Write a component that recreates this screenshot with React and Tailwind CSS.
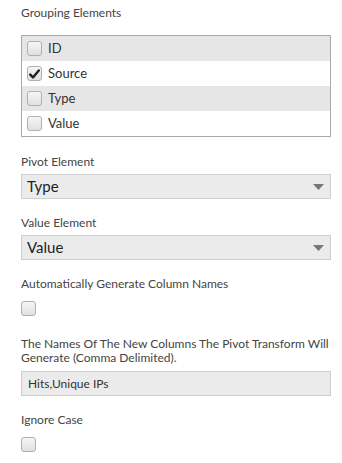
import React from 'react';

const font = { fontFamily: 'Lato, "Open Sans", "Liberation Sans", sans-serif' };

function Box({ checked }) {
  return (
    <span className="flex h-[15px] w-[15px] shrink-0 items-center justify-center rounded-[3px] border border-[#b0b0b0] bg-gradient-to-b from-[#f6f6f6] to-[#e0e0e0]">
      {checked && (
        <svg width="11" height="10" viewBox="0 0 11 10">
          <path d="M1.2 5.6 L4 8.4 L9.8 1.4" fill="none" stroke="#222" strokeWidth="2.4" strokeLinecap="round" strokeLinejoin="round" />
        </svg>
      )}
    </span>
  );
}

function Select({ value }) {
  return (
    <div className="flex h-[25px] items-center justify-between border border-[#cfcfcf] bg-[#ebebeb] pl-[5px] pr-[6px] text-[15px] text-[#222]">
      <span>{value}</span>
      <svg width="11" height="6" viewBox="0 0 11 6">
        <path d="M0 0 H11 L5.5 6 Z" fill="#777" />
      </svg>
    </div>
  );
}

export default function App() {
  const items = [
    { label: 'ID', checked: false },
    { label: 'Source', checked: true },
    { label: 'Type', checked: false },
    { label: 'Value', checked: false },
  ];

  return (
    <div className="h-[463px] w-[342px] bg-white pl-[21px] pr-[11px] pt-[5px] text-[12px] text-[#444]" style={font}>
      <div className="leading-[16px]">Grouping Elements</div>

      <div className="mt-[14px] border border-[#a9a9a9]">
        {items.map((item, i) => (
          <div
            key={item.label}
            className={`flex h-[25px] items-center gap-[6px] pl-[5px] text-[13px] text-[#333] ${i % 2 === 0 ? 'bg-[#e6e6e6]' : 'bg-white'}`}
          >
            <Box checked={item.checked} />
            <span>{item.label}</span>
          </div>
        ))}
      </div>

      <div className="mt-[17px] leading-[16px]">Pivot Element</div>
      <div className="mt-[4px]">
        <Select value="Type" />
      </div>

      <div className="mt-[16px] leading-[16px]">Value Element</div>
      <div className="mt-[4px]">
        <Select value="Value" />
      </div>

      <div className="mt-[16px] leading-[16px]">Automatically Generate Column Names</div>
      <div className="mt-[9px]">
        <Box checked={false} />
      </div>

      <div className="mt-[21px] leading-[14px]">
        The Names Of The New Columns The Pivot Transform Will Generate (Comma Delimited).
      </div>
      <div className="mt-[6px] flex h-[25px] items-center border border-[#cfcfcf] bg-[#ebebeb] pl-[6px] text-[12px] text-[#333]">
        Hits,Unique IPs
      </div>

      <div className="mt-[16px] leading-[16px]">Ignore Case</div>
      <div className="mt-[9px]">
        <Box checked={false} />
      </div>
    </div>
  );
}
